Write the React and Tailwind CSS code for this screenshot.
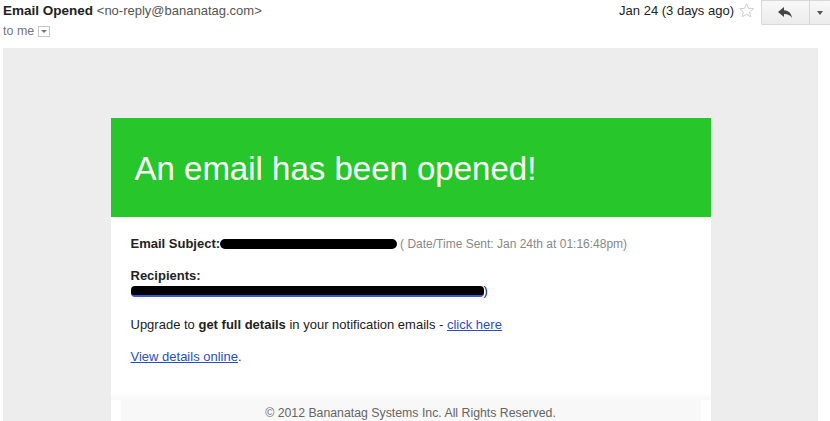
import React from 'react';

const ReplyIcon = () => (
  <svg width="16" height="12" viewBox="0 0 16 12">
    <path d="M6 0 L0 5 L6 10 L6 7 C10 7 12 8 14 11 C13.5 6.5 11 3.5 6 3.2 Z" fill="#444" />
  </svg>
);

const Star = () => (
  <svg width="17" height="17" viewBox="0 0 24 24">
    <path
      d="M12 2.5 L14.8 9 L21.8 9.5 L16.4 14 L18.1 21 L12 17.2 L5.9 21 L7.6 14 L2.2 9.5 L9.2 9 Z"
      fill="none"
      stroke="#c8c8c8"
      strokeWidth="1.3"
    />
  </svg>
);

const App = () => {
  return (
    <div className="w-[830px] h-[421px] overflow-hidden bg-white font-['Liberation_Sans',Arial,sans-serif]">
      {/* Message header */}
      <div className="flex h-[48px]">
        <div className="pl-[3px] pt-[2px] flex-1">
          <div className="text-[13.5px] leading-[18px] text-[#222]">
            <span className="font-bold">Email Opened</span>{' '}
            <span className="text-[#555] text-[13px]">&lt;no-reply@bananatag.com&gt;</span>
          </div>
          <div className="flex items-center mt-[3px] text-[12.5px] text-[#777] leading-[16px]">
            to me
            <span className="ml-[4px] w-[12px] h-[11px] border border-[#c6c6c6] flex items-center justify-center">
              <span className="w-0 h-0 border-l-[3px] border-r-[3px] border-t-[3px] border-l-transparent border-r-transparent border-t-[#777]" />
            </span>
          </div>
        </div>
        <div className="flex items-start">
          <span className="text-[13px] text-[#222] leading-[18px] pt-[2px] mr-[4px]">Jan 24 (3 days ago)</span>
          <span className="pt-[2px] mr-[6px]"><Star /></span>
          <div className="flex h-[25px] border border-[#d8d8d8] border-r-0 rounded-bl-[2px] bg-gradient-to-b from-[#f8f8f8] to-[#ececec]">
            <div className="w-[48px] flex items-center justify-center border-r border-[#d8d8d8]">
              <ReplyIcon />
            </div>
            <div className="w-[20px] flex items-center justify-center">
              <span className="w-0 h-0 border-l-[3px] border-r-[3px] border-t-[4px] border-l-transparent border-r-transparent border-t-[#555]" />
            </div>
          </div>
        </div>
      </div>

      {/* Email body */}
      <div className="ml-[3px] w-[815px] bg-[#ededed] pt-[70px] h-[373px]">
        <div className="mx-auto w-[600px] bg-white">
          <div className="bg-[#27c72b] h-[99px] pl-[24px] flex items-center">
            <h1 className="text-white text-[33px] leading-[36px] pt-[2px]">An email has been opened!</h1>
          </div>
          <div className="px-[20px] pt-[19px] text-[13px] text-[#222] leading-[16px]">
            <p className="flex items-center">
              <span className="font-bold">Email Subject:</span>
              <span className="inline-block w-[177px] h-[10px] bg-black rounded-[5px]" />
              <span className="text-[12px] text-[#888] ml-[3px]">( Date/Time Sent: Jan 24th at 01:16:48pm)</span>
            </p>
            <p className="font-bold mt-[16px]">Recipients:</p>
            <p className="flex items-center h-[14px]">
              <span className="inline-block w-[353px] h-[11px] bg-black rounded-[4px] border-b-2 border-[#3b59c9]" />
              <span className="text-[#222]">)</span>
            </p>
            <p className="mt-[19px]">
              Upgrade to <span className="font-bold">get full details</span> in your notification emails -{' '}
              <a className="text-[#2a4fbf] underline" href="#">click here</a>
            </p>
            <p className="mt-[16px]">
              <a className="text-[#2a4fbf] underline" href="#">View details online</a>.
            </p>
          </div>
          <div className="mt-[27px] bg-gradient-to-b from-white to-[#f8f8f8] h-[8px]" />
          <div className="mx-[10px] bg-[#f8f8f8] pt-[5px] pb-[10px] text-center text-[12.3px] text-[#666] leading-[16px]">
            © 2012 Bananatag Systems Inc. All Rights Reserved.
          </div>
        </div>
      </div>
    </div>
  );
};

export default App;
